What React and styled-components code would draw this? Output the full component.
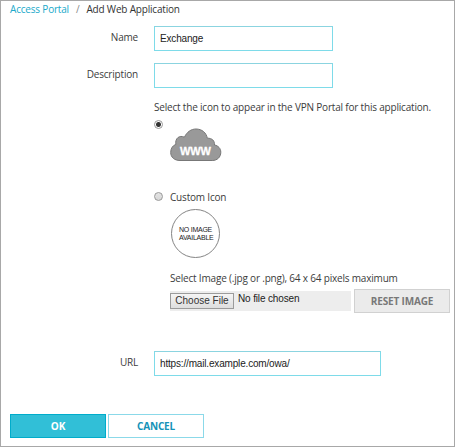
import React from "react";
import styled, { createGlobalStyle } from "styled-components";

const GlobalStyle = createGlobalStyle`
  *, *::before, *::after { box-sizing: border-box; }
  body { margin: 0; background: #fff; }
`;

const Page = styled.main`
  width: 455px;
  height: 447px;
  border: 1px solid #a8a8a8;
  background: #fff;
  color: #3c3c3c;
  font: 10px/16px "Open Sans", "Noto Sans", sans-serif;
  letter-spacing: -0.19px;
  overflow: hidden;
  white-space: nowrap;
`;

const Breadcrumb = styled.nav`
  display: flex;
  gap: 7px;
  height: 25px;
  padding-left: 9px;
`;

const Crumb = styled.span`
  color: ${({ $tone }) => $tone};
`;

const Form = styled.form`
  display: block;
`;

const Row = styled.div`
  display: grid;
  grid-template-columns: 137px 1fr;
  column-gap: 16px;
  height: ${({ $height }) => $height}px;
`;

const Label = styled.label`
  padding-top: 3px;
  text-align: right;
`;

const TextInput = styled.input`
  width: ${({ $width }) => $width}px;
  height: 25px;
  padding: 0 5px;
  border: 1px solid #7edbe9;
  border-top-color: #8bd4e0;
  border-radius: 0;
  outline: 0;
  background: #fff;
  color: #222;
  font: 10px "Liberation Sans", Arial, sans-serif;
  letter-spacing: -0.17px;
`;

const Options = styled.section`
  padding-left: 153px;
  height: 252px;
`;

const Hint = styled.div`
  height: 18px;
`;

const Option = styled.div`
  display: grid;
  grid-template-columns: 9px 1fr;
  column-gap: 7px;
  height: ${({ $height }) => $height}px;
`;

const Radio = styled.input`
  appearance: none;
  width: 9px;
  height: 9px;
  margin: 3px 0 0;
  border: 1px solid #999;
  border-radius: 50%;
  background: linear-gradient(#e4e4e4, #d7d7d7);
  &:checked {
    background: radial-gradient(circle, #333 0 2px, #fff 3px);
  }
`;

const OptionBody = styled.div`
  min-width: 0;
`;

const CloudIcon = styled.svg`
  display: block;
  width: 52px;
  height: 34px;
  margin-top: 11px;
`;

const NoImage = styled.div`
  display: flex;
  align-items: center;
  width: 49px;
  height: 49px;
  margin: 4px 0 0 1px;
  padding-left: 7px;
  border: 1px solid #858585;
  border-radius: 50%;
  font: 7px/8px "Liberation Sans", Arial, sans-serif;
  letter-spacing: -0.25px;
  color: #222;
`;

const UploadText = styled.div`
  margin-top: 12px;
`;

const UploadRow = styled.div`
  display: flex;
  align-items: center;
  gap: 3px;
  height: 24px;
  margin-top: 3px;
`;

const FilePicker = styled.div`
  display: flex;
  gap: 4px;
  width: 181px;
  height: 20px;
  background: #ededed;
  color: #222;
  font: 10px/16px "Liberation Sans", Arial, sans-serif;
  letter-spacing: -0.14px;
`;

const ChooseButton = styled.button`
  width: 64px;
  height: 16px;
  margin-top: 2px;
  padding: 0;
  border: 1px solid #9b9b9b;
  border-radius: 0;
  background: linear-gradient(#f5f5f5, #dedede);
  color: #333;
  font: 10px/14px "Liberation Sans", Arial, sans-serif;
`;

const Actions = styled.footer`
  display: flex;
  gap: 2px;
  padding-left: 9px;
`;

const palettes = {
  primary: ["#31bfd7", "#00accb", "#fff"],
  outline: ["#fff", "#8bd9e9", "#1492b8"],
  disabled: ["#ebebeb", "#d1d1d1", "#787878"],
};

const Button = styled.button`
  width: 96px;
  height: 24px;
  padding: 0;
  border: 1px solid ${({ $kind }) => palettes[$kind][1]};
  border-radius: 0;
  background: ${({ $kind }) => palettes[$kind][0]};
  color: ${({ $kind }) => palettes[$kind][2]};
  font: 700 10px/20px "Open Sans", "Noto Sans", sans-serif;
  letter-spacing: -0.15px;
`;

export default function App() {
  return (
    <>
      <GlobalStyle />
      <Page>
        <Breadcrumb>
          <Crumb $tone="#20a9ca">Access Portal</Crumb>
          <Crumb $tone="#888">/</Crumb>
          <Crumb $tone="#333">Add Web Application</Crumb>
        </Breadcrumb>
        <Form onSubmit={(e) => e.preventDefault()}>
          <Row $height={37}>
            <Label htmlFor="name">Name</Label>
            <TextInput id="name" $width={179} defaultValue="Exchange" />
          </Row>
          <Row $height={36}>
            <Label htmlFor="description">Description</Label>
            <TextInput id="description" $width={179} />
          </Row>
          <Options>
            <Hint>Select the icon to appear in the VPN Portal for this application.</Hint>
            <Option $height={72}>
              <Radio type="radio" name="icon" defaultChecked />
              <OptionBody>
                <CloudIcon viewBox="0 0 52 34">
                  <path
                    d="M10 32.5C4.5 32.5.7 29.3.7 24.5c0-4.3 2.2-7.2 5.2-8.1C4.7 10.5 9.5 6.7 14.4 9.2 17 3.8 21.2 1 26 1c6 0 10.4 3.8 11.3 9.2 4.9-.2 7.5 2.7 7.2 6.8 3.7.7 6.3 3.4 6.3 7.2 0 5-3.6 8.3-8.6 8.3Z"
                    fill="#999"
                    stroke="#777"
                  />
                  <text
                    x="25.5"
                    y="27"
                    textAnchor="middle"
                    textLength="31"
                    letterSpacing="0"
                    fill="#fff"
                    stroke="#fff"
                    strokeWidth=".3"
                    fontFamily="Liberation Sans, Arial, sans-serif"
                    fontSize="11"
                    fontWeight="700"
                  >
                    WWW
                  </text>
                </CloudIcon>
              </OptionBody>
            </Option>
            <Option $height={162}>
              <Radio type="radio" name="icon" />
              <OptionBody>
                Custom Icon
                <NoImage>NO IMAGE<br />AVAILABLE</NoImage>
                <UploadText>Select Image (.jpg or .png), 64 x 64 pixels maximum</UploadText>
                <UploadRow>
                  <FilePicker>
                    <ChooseButton type="button">Choose File</ChooseButton>
                    No file chosen
                  </FilePicker>
                  <Button type="button" $kind="disabled">RESET IMAGE</Button>
                </UploadRow>
              </OptionBody>
            </Option>
          </Options>
          <Row $height={63}>
            <Label htmlFor="url">URL</Label>
            <TextInput id="url" $width={227} defaultValue="https://mail.example.com/owa/" />
          </Row>
          <Actions>
            <Button $kind="primary">OK</Button>
            <Button type="button" $kind="outline">CANCEL</Button>
          </Actions>
        </Form>
      </Page>
    </>
  );
}
